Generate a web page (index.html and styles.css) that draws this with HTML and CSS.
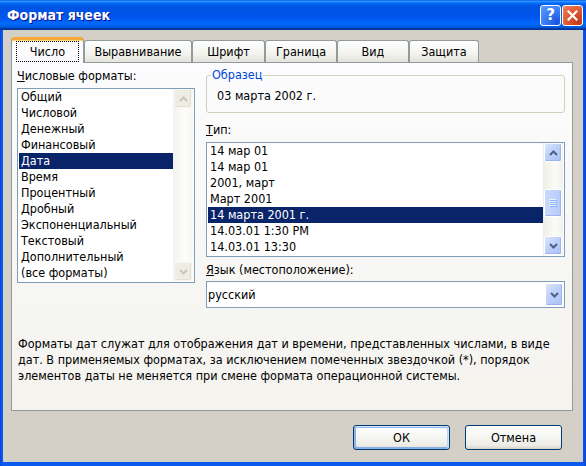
FILE: index.html
```html
<!DOCTYPE html>
<html lang="ru">
<head>
<meta charset="utf-8">
<title>Формат ячеек</title>
<link rel="stylesheet" href="styles.css">
</head>
<body>
<div class="window">
  <div class="titlebar">
    <span class="title">Формат ячеек</span>
    <div class="caption-buttons">
      <button class="cap help"><span class="qmark">?</span></button>
      <button class="cap close"><svg width="11" height="11" viewBox="0 0 11 11"><path d="M1.5 1.5 L9.5 9.5 M9.5 1.5 L1.5 9.5" stroke="#fff" stroke-width="2.2" stroke-linecap="square"/></svg></button>
    </div>
  </div>
  <div class="client">
    <div class="tabs">
      <div class="tab active w1"><span class="focus">Число</span></div>
      <div class="tab w2">Выравнивание</div>
      <div class="tab w3">Шрифт</div>
      <div class="tab w4">Граница</div>
      <div class="tab w5">Вид</div>
      <div class="tab w6">Защита</div>
    </div>
    <div class="panel">
      <div class="col-left">
        <div class="label"><u>Ч</u>исловые форматы:</div>
        <div class="listbox cats">
          <ul class="items">
            <li>Общий</li>
            <li>Числовой</li>
            <li>Денежный</li>
            <li>Финансовый</li>
            <li class="sel">Дата</li>
            <li>Время</li>
            <li>Процентный</li>
            <li>Дробный</li>
            <li>Экспоненциальный</li>
            <li>Текстовый</li>
            <li>Дополнительный</li>
            <li>(все форматы)</li>
          </ul>
          <div class="vscroll disabled">
            <div class="sbtn"><svg width="9" height="6" viewBox="0 0 9 6"><path d="M1 5 L4.5 1.5 L8 5" fill="none" stroke="#C9C7BA" stroke-width="2"/></svg></div>
            <div class="track"></div>
            <div class="sbtn"><svg width="9" height="6" viewBox="0 0 9 6"><path d="M1 1 L4.5 4.5 L8 1" fill="none" stroke="#C9C7BA" stroke-width="2"/></svg></div>
          </div>
        </div>
      </div>
      <div class="col-right">
        <fieldset class="sample">
          <legend>Образец</legend>
          <div class="sample-text">03 марта 2002 г.</div>
        </fieldset>
        <div class="label gap-type"><u>Т</u>ип:</div>
        <div class="listbox types">
          <ul class="items">
            <li>14 мар 01</li>
            <li>14 мар 01</li>
            <li>2001, март</li>
            <li>Март 2001</li>
            <li class="sel">14 марта 2001 г.</li>
            <li>14.03.01 1:30 PM</li>
            <li>14.03.01 13:30</li>
          </ul>
          <div class="vscroll">
            <div class="sbtn"><svg width="9" height="6" viewBox="0 0 9 6"><path d="M1 5 L4.5 1.5 L8 5" fill="none" stroke="#4D6185" stroke-width="2"/></svg></div>
            <div class="track">
              <div class="thumb"><svg width="8" height="8" viewBox="0 0 8 8"><path d="M0 0.5h7M0 2.5h7M0 4.5h7M0 6.5h7" stroke="#EEF4FE"/><path d="M1 1.5h7M1 3.5h7M1 5.5h7M1 7.5h7" stroke="#8CB0F8"/></svg></div>
            </div>
            <div class="sbtn"><svg width="9" height="6" viewBox="0 0 9 6"><path d="M1 1 L4.5 4.5 L8 1" fill="none" stroke="#4D6185" stroke-width="2"/></svg></div>
          </div>
        </div>
        <div class="label gap-lang"><u>Я</u>зык (местоположение):</div>
        <div class="combo">
          <span class="combo-text">русский</span>
          <span class="drop"><svg width="9" height="6" viewBox="0 0 9 6"><path d="M1 1 L4.5 4.5 L8 1" fill="none" stroke="#4D6185" stroke-width="2"/></svg></span>
        </div>
      </div>
      <p class="desc">Форматы дат служат для отображения дат и времени, представленных числами, в виде<br>дат. В применяемых форматах, за исключением помеченных звездочкой (*), порядок<br>элементов даты не меняется при смене формата операционной системы.</p>
    </div>
    <div class="buttons">
      <button class="btn default">ОК</button>
      <button class="btn">Отмена</button>
    </div>
  </div>
</div>
</body>
</html>
```
FILE: styles.css
```css
* { box-sizing: border-box; }
html, body { margin: 0; padding: 0; }
body {
  width: 586px;
  height: 466px;
  overflow: hidden;
  background: #0553E8;
  font-family: "DejaVu Sans Condensed", "DejaVu Sans", sans-serif;
  font-stretch: condensed;
  font-size: 12.5px;
  color: #000;
}
.window {
  width: 586px;
  height: 466px;
  display: flex;
  flex-direction: column;
  background: linear-gradient(to right, #0842D0, #0A5AF0 2px, #0A5AF0 583px, #0842D0);
}
.titlebar {
  height: 30px;
  flex: none;
  display: flex;
  align-items: center;
  justify-content: space-between;
  padding: 0 3px 0 7px;
  background: linear-gradient(to bottom, #0058EE 0%, #3593FF 4%, #288EFF 6%, #127DFF 8%, #036FFC 10%, #0262EE 14%, #0057E5 20%, #0054E3 24%, #0055EB 56%, #005BF5 66%, #026AFE 76%, #0062EF 86%, #0052D6 92%, #0040AB 94%, #003092 100%);
}
.title {
  color: #fff;
  font-family: "DejaVu Sans Condensed", "DejaVu Sans", sans-serif;
  font-stretch: condensed;
  font-weight: bold;
  font-size: 14px;
  text-shadow: 1px 1px #0F1089;
}
.caption-buttons { display: flex; gap: 1px; }
.cap {
  width: 21px;
  height: 21px;
  padding: 0;
  border: 1px solid #fff;
  border-radius: 3px;
  display: flex;
  align-items: center;
  justify-content: center;
}
.help {
  background: radial-gradient(circle at 85% 85%, #1A54E0 0%, #3C7FF5 55%, #5E9AFB 100%);
}
.qmark {
  color: #fff;
  font-family: "DejaVu Sans", sans-serif;
  font-stretch: normal;
  font-weight: bold;
  font-size: 15px;
  line-height: 15px;
}
.close {
  background: radial-gradient(circle at 85% 85%, #C13A16 0%, #E05A34 55%, #EE8466 100%);
}
.client {
  flex: 1;
  margin: 0 3px 4px 3px;
  background: #D4D0C8;
  display: flex;
  flex-direction: column;
}
.tabs {
  display: flex;
  align-items: flex-end;
  height: 25px;
  margin: 7px 0 0 8px;
}
.tab {
  height: 22px;
  border: 1px solid #919B9C;
  border-bottom: none;
  border-radius: 3px 3px 0 0;
  background: linear-gradient(to bottom, #FFFFFF, #F3F3EF 60%, #E4E3DC);
  display: flex;
  align-items: center;
  justify-content: center;
  line-height: 16px;
  padding-top: 1px;
}
.w1 { width: 73px; }
.w2 { width: 108px; }
.w3 { width: 73px; }
.w4 { width: 72px; }
.w5 { width: 72px; }
.w6 { width: 70px; }
.tab.active {
  height: 26px;
  margin-bottom: -1px;
  position: relative;
  z-index: 1;
  background: #FCFCFE;
  border-top: 3px solid #F6A83A;
  border-radius: 4px 4px 0 0;
  box-shadow: inset 0 1px #FFD77A;
  padding: 0;
  align-items: stretch;
}
.focus {
  flex: 1;
  margin: 1px 4px 1px 4px;
  border: 1px dotted #000;
  display: flex;
  align-items: center;
  justify-content: center;
}
.panel {
  margin-left: 8px;
  width: 562px;
  height: 349px;
  flex: none;
  border: 1px solid #919B9C;
  background: linear-gradient(to bottom, #FCFCFE, #F4F3EE);
  display: grid;
  grid-template-columns: 178px 359px;
  column-gap: 11px;
  align-content: start;
  padding: 5px 0 0 5px;
}
.label { line-height: 16px; height: 16px; white-space: nowrap; }
.listbox {
  margin-top: 4px;
  border: 1px solid #7F9DB9;
  background: #fff;
  display: flex;
  padding: 0 1px 1px 1px;
}
.cats { height: 195px; }
.types { height: 115px; }
.items {
  list-style: none;
  margin: 0;
  padding: 0;
  flex: 1;
  min-width: 0;
}
.items li {
  height: 16px;
  line-height: 16px;
  padding-left: 2px;
  white-space: nowrap;
}
.items li.sel { background: #0A246A; color: #fff; }
.vscroll {
  width: 20px;
  flex: none;
  display: flex;
  flex-direction: column;
  background: linear-gradient(to right, #EEEDE5, #FBFBF8 60%, #F3F1EC);
}
.sbtn {
  height: 19px;
  margin: 0 1px;
  flex: none;
  border: 1px solid #fff;
  border-radius: 2px;
  background: linear-gradient(135deg, #DCE6FD, #C1D3FB 40%, #A9C0F5);
  box-shadow: inset -1px -1px #9BB3EE;
  display: flex;
  align-items: center;
  justify-content: center;
}
.track { flex: 1; }
.thumb {
  margin: 27px 1px 0 1px;
  height: 28px;
  border: 1px solid #fff;
  border-radius: 2px;
  background: linear-gradient(to right, #C9D8FC, #C1D3FB 50%, #B4C9F8);
  box-shadow: inset -1px -1px #9BB3EE;
  display: flex;
  align-items: center;
  justify-content: center;
}
.disabled .sbtn {
  background: #EEEDE5;
  border-color: #F6F5F0;
  box-shadow: inset -1px -1px #E2E0D6;
}
.disabled { background: linear-gradient(to right, #F3F2EC, #FDFDFB 60%, #F7F6F1); }
.col-right { margin-top: -1px; }
.sample {
  margin: 0;
  min-width: 0;
  border: 1px solid #D0D0BF;
  border-radius: 3px;
  padding: 5px 10px 8px 10px;
}
.sample legend {
  color: #0046D5;
  line-height: 16px;
  padding: 0 1px;
  margin-left: -6px;
}
.sample-text { line-height: 16px; }
.gap-type { margin-top: 9px; }
.gap-lang { margin-top: 5px; }
.combo {
  margin-top: 3px;
  height: 27px;
  border: 1px solid #7F9DB9;
  background: #fff;
  display: flex;
  align-items: stretch;
}
.combo-text { flex: 1; padding-left: 1px; line-height: 25px; }
.drop {
  width: 18px;
  margin: 1px 1px 1px 0;
  border: 1px solid #fff;
  border-radius: 2px;
  background: linear-gradient(135deg, #DCE6FD, #C1D3FB 40%, #A9C0F5);
  box-shadow: inset -1px -1px #9BB3EE;
  display: flex;
  align-items: center;
  justify-content: center;
}
.desc {
  grid-column: 1 / -1;
  margin: 28px 0 0 0;
  padding-left: 1px;
  line-height: 16px;
  white-space: nowrap;
}
.buttons {
  margin-top: 14px;
  display: flex;
  justify-content: flex-end;
  gap: 15px;
  padding-right: 21px;
}
.btn {
  width: 97px;
  height: 25px;
  padding: 0;
  border: 1px solid #003C74;
  border-radius: 3px;
  background: linear-gradient(to bottom, #FFFFFF, #F3F3EF 60%, #ECEBE6 86%, #D6D0C5);
  font: inherit;
  color: #000;
}
.btn.default {
  box-shadow: inset -1px 1px #CEE7FF, inset 1px 2px #98B8EA, inset -2px 2px #BCD4F6, inset 1px -1px #89ADE4, inset 2px -2px #89ADE4;
}
```
